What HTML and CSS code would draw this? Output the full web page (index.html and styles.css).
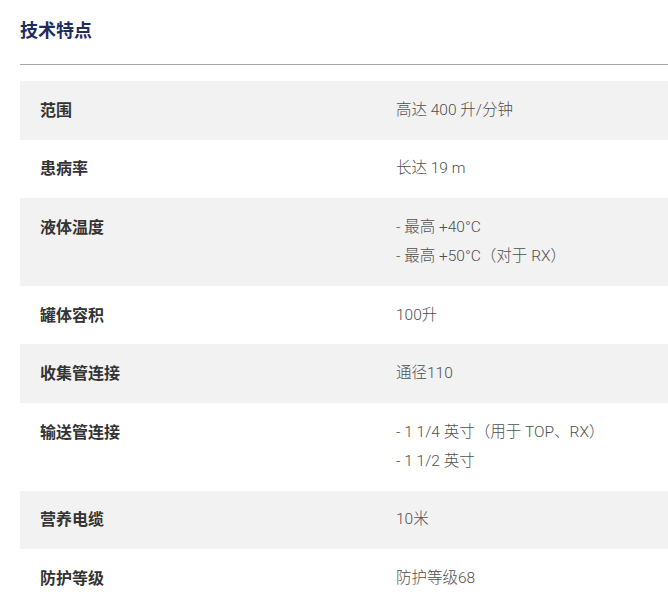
FILE: index.html
```html
<!DOCTYPE html>
<html lang="zh">
<head>
<meta charset="utf-8">
<link rel="stylesheet" href="styles.css">
</head>
<body>
<section class="specs">
  <h2 class="specs-title">技术特点</h2>
  <div class="specs-table">
    <div class="row"><div class="label">范围</div><div class="value">高达 400 升/分钟</div></div>
    <div class="row"><div class="label">患病率</div><div class="value">长达 19 m</div></div>
    <div class="row"><div class="label">液体温度</div><div class="value">- 最高 +40°C<br>- 最高 +50°C（对于 RX）</div></div>
    <div class="row"><div class="label">罐体容积</div><div class="value">100升</div></div>
    <div class="row"><div class="label">收集管连接</div><div class="value">通径110</div></div>
    <div class="row"><div class="label">输送管连接</div><div class="value">- 1 1/4 英寸（用于 TOP、RX）<br>- 1 1/2 英寸</div></div>
    <div class="row"><div class="label">营养电缆</div><div class="value">10米</div></div>
    <div class="row"><div class="label">防护等级</div><div class="value">防护等级68</div></div>
  </div>
</section>
</body>
</html>
```
FILE: styles.css
```css
html, body {
  margin: 0;
  padding: 0;
  background: #ffffff;
}
body {
  font-family: Roboto, "Noto Sans CJK SC", sans-serif;
  overflow: hidden;
}
.specs {
  padding-left: 20px;
}
.specs-title {
  margin: 0;
  padding-top: 19px;
  height: 65px;
  box-sizing: border-box;
  border-bottom: 1px solid #a6a6a6;
  font-size: 18px;
  line-height: 24px;
  font-weight: 700;
  color: #1f2c5e;
}
.specs-table {
  margin-top: 16px;
}
.row {
  display: grid;
  grid-template-columns: 356px 1fr;
  padding: 14.8px 20px;
  line-height: 29px;
}
.row:nth-child(odd) {
  background: #f2f2f2;
}
.label {
  font-size: 16px;
  font-weight: 700;
  color: #333333;
}
.value {
  font-size: 15.5px;
  font-weight: 300;
  color: #4f4f4f;
}
```
